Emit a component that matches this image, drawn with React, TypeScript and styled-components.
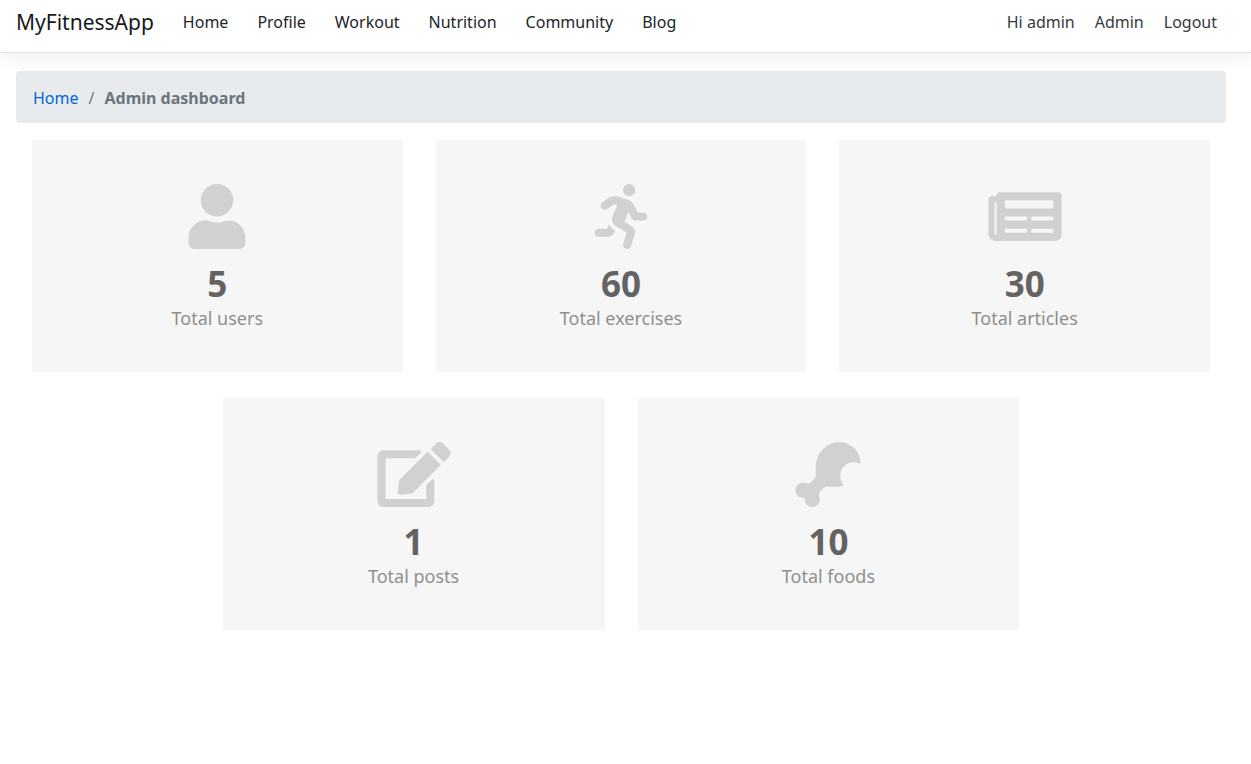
import React from "react";
import styled, { createGlobalStyle } from "styled-components";
import { FaUser, FaRunning, FaNewspaper, FaEdit, FaDrumstickBite } from "react-icons/fa";
import type { IconType } from "react-icons";

const GlobalStyle = createGlobalStyle`
  *, *::before, *::after { box-sizing: border-box; }
  body {
    margin: 0;
    background: #fff;
    color: #212529;
    font: 16px/26px "Noto Sans", "Open Sans", sans-serif;
  }
`;

const Header = styled.header`
  display: flex;
  align-items: flex-start;
  padding: 9px 34px 17px 16px;
  border-bottom: 1px solid #dee2e6;
  box-shadow: 0 8px 16px rgba(0, 0, 0, 0.05);
`;

const Brand = styled.a`
  margin-right: 29px;
  color: #16181b;
  font-size: 21px;
  text-decoration: none;
`;

const NavGroup = styled.nav<{ $gap: number }>`
  display: flex;
  gap: ${({ $gap }) => $gap}px;
`;

const NavLink = styled.a<{ $muted?: boolean }>`
  color: ${({ $muted }) => ($muted ? "#343a40" : "#212529")};
  text-decoration: none;
`;

const Account = styled(NavGroup)`
  margin-left: auto;
`;

const Greeting = styled.span`
  color: #343a40;
`;

const Main = styled.main`
  padding: 18px 25px 0 16px;
`;

const Breadcrumb = styled.ol`
  display: flex;
  gap: 10px;
  margin: 0 0 17px;
  padding: 14px 17px 12px;
  border-radius: 4px;
  background: #e8ebee;
  color: #6c757d;
  list-style: none;
`;

const Crumb = styled.li`
  & + &::before {
    content: "/";
    padding-right: 10px;
  }
`;

const CrumbLink = styled.a`
  color: #0366d6;
  text-decoration: none;
`;

const Row = styled.section<{ $columns: number; $width: string }>`
  display: grid;
  grid-template-columns: repeat(${({ $columns }) => $columns}, 1fr);
  gap: 33px;
  width: ${({ $width }) => $width};
  margin: 0 auto 26px;
`;

const Card = styled.article`
  display: flex;
  flex-direction: column;
  align-items: center;
  padding: 44px 16px 39px;
  background: #f6f6f6;

  svg {
    width: 74px;
    height: 65px;
    color: #d1d1d1;
  }
`;

const Value = styled.strong`
  margin-top: 15px;
  color: #636363;
  font-size: 35px;
  line-height: 39px;
`;

const Label = styled.span`
  color: #8f8f8f;
  font-size: 18px;
  line-height: 30px;
`;

type Stat = { icon: IconType; value: number; label: string };

const topStats: Stat[] = [
  { icon: FaUser, value: 5, label: "Total users" },
  { icon: FaRunning, value: 60, label: "Total exercises" },
  { icon: FaNewspaper, value: 30, label: "Total articles" },
];

const bottomStats: Stat[] = [
  { icon: FaEdit, value: 1, label: "Total posts" },
  { icon: FaDrumstickBite, value: 10, label: "Total foods" },
];

function StatCard({ icon: Icon, value, label }: Stat) {
  return (
    <Card>
      <Icon aria-hidden />
      <Value>{value}</Value>
      <Label>{label}</Label>
    </Card>
  );
}

export default function App() {
  return (
    <>
      <GlobalStyle />
      <Header>
        <Brand href="#">MyFitnessApp</Brand>
        <NavGroup $gap={29} aria-label="Main">
          {["Home", "Profile", "Workout", "Nutrition", "Community", "Blog"].map((item) => (
            <NavLink key={item} href="#">{item}</NavLink>
          ))}
        </NavGroup>
        <Account $gap={20} aria-label="Account">
          <Greeting>Hi admin</Greeting>
          <NavLink $muted href="#">Admin</NavLink>
          <NavLink $muted href="#">Logout</NavLink>
        </Account>
      </Header>
      <Main>
        <Breadcrumb>
          <Crumb><CrumbLink href="#">Home</CrumbLink></Crumb>
          <Crumb aria-current="page"><b>Admin dashboard</b></Crumb>
        </Breadcrumb>
        <Row $columns={3} $width="calc(100% - 32px)">
          {topStats.map((s) => <StatCard key={s.label} {...s} />)}
        </Row>
        <Row $columns={2} $width="calc(66% - 2px)">
          {bottomStats.map((s) => <StatCard key={s.label} {...s} />)}
        </Row>
      </Main>
    </>
  );
}
